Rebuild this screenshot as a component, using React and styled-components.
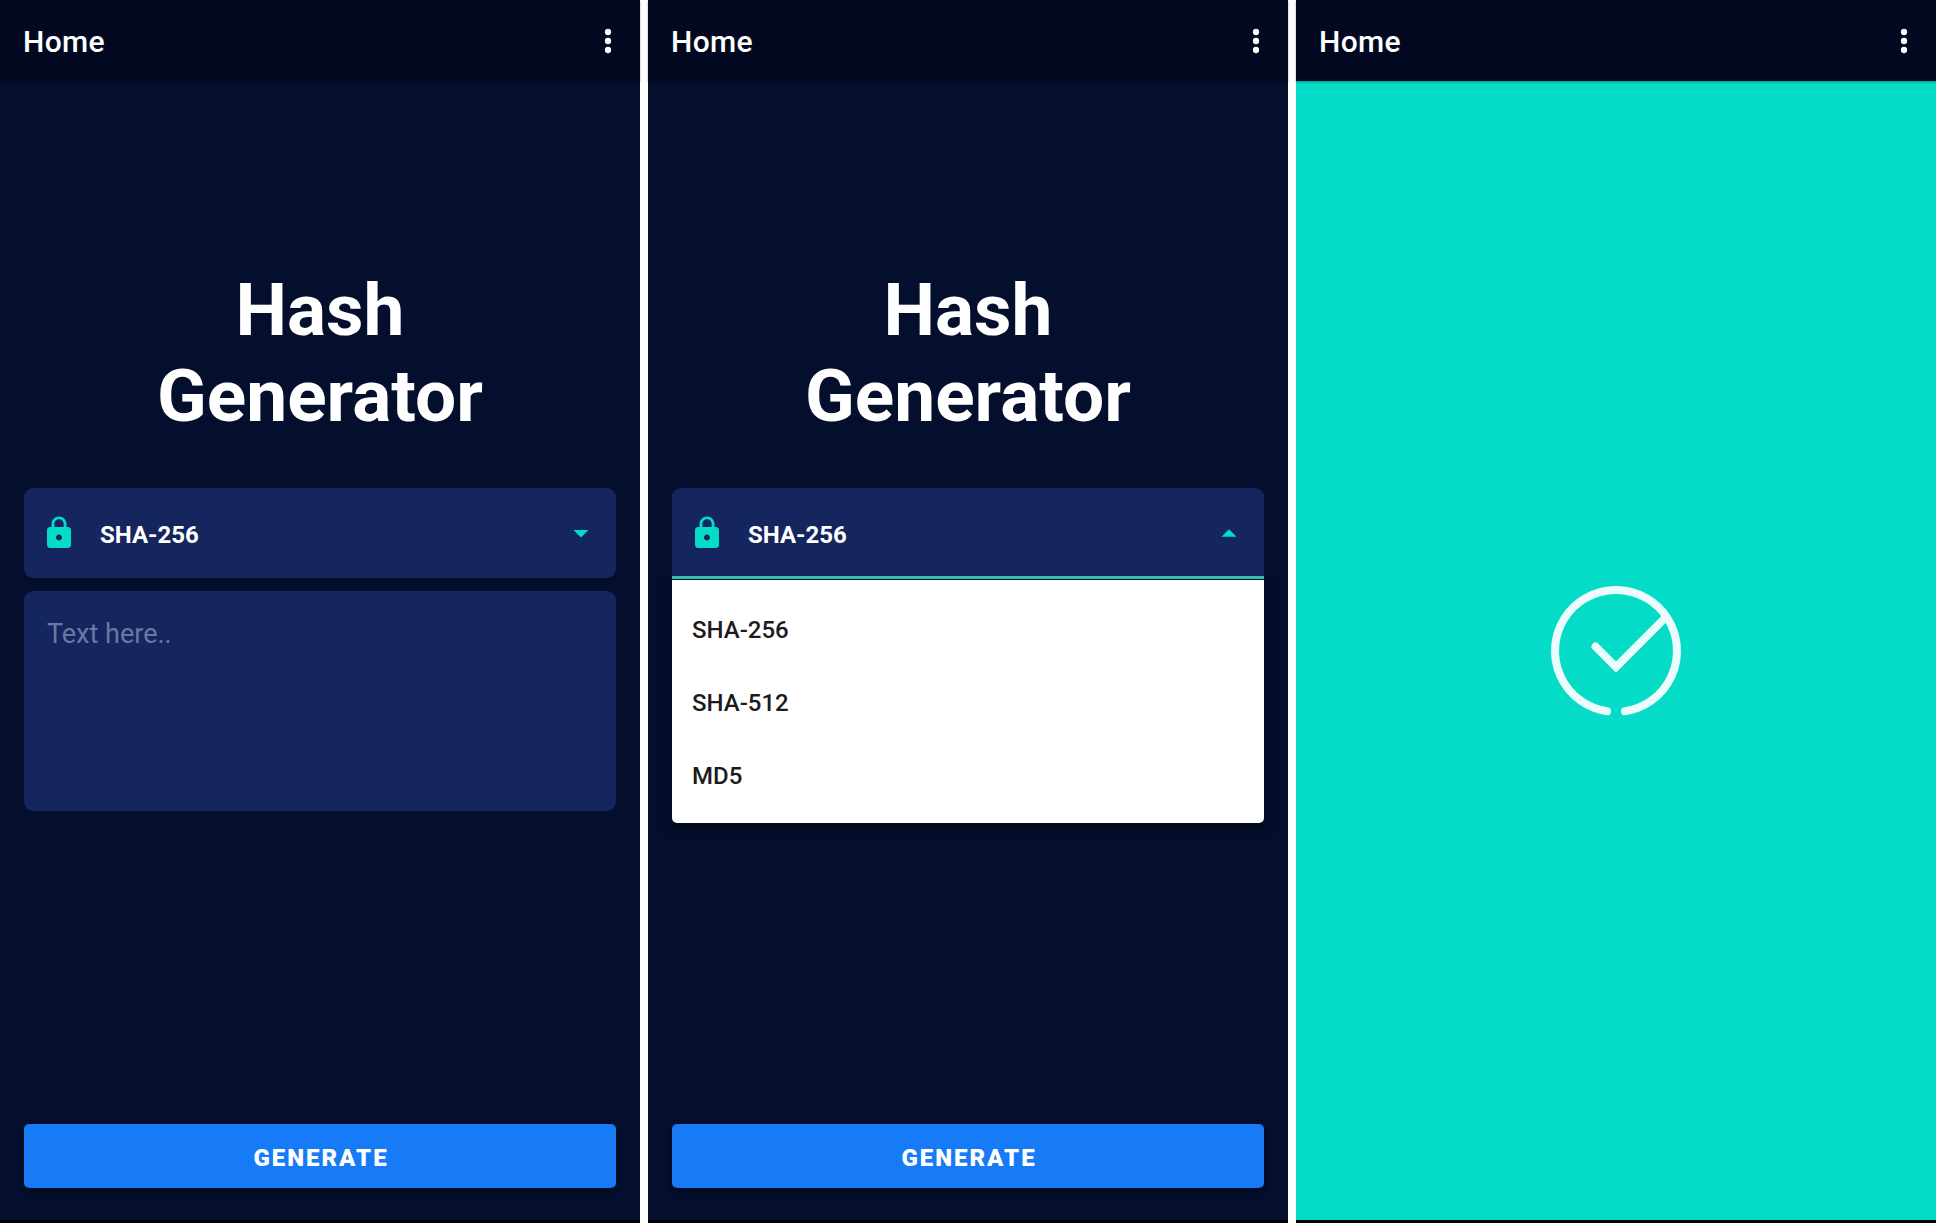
import React, { useState } from "react";
import styled, { createGlobalStyle } from "styled-components";

const GlobalStyle = createGlobalStyle`
  *, *::before, *::after { box-sizing: border-box; }
  body {
    margin: 0;
    background: #ffffff;
    font-family: Roboto, "Noto Sans", sans-serif;
    -webkit-font-smoothing: antialiased;
  }
`;

const Gallery = styled.div`
  display: grid;
  grid-template-columns: repeat(3, minmax(0, 1fr));
  gap: 8px;
  min-height: 100vh;
`;

const Phone = styled.section`
  display: flex;
  flex-direction: column;
  background: ${(p) => (p.$success ? "#04dcc8" : "#030f2c")};
  border-bottom: 3px solid #000000;
`;

const AppBar = styled.header`
  display: flex;
  align-items: center;
  justify-content: space-between;
  height: 81px;
  padding: 2px 14px 0 23px;
  background: #010820;
  box-shadow: 0 1px 2px rgba(0, 4, 20, 0.35);
`;

const BarTitle = styled.h2`
  margin: 0;
  color: #ffffff;
  font-size: 30px;
  font-weight: 500;
  line-height: 36px;
  letter-spacing: 0.0125em;
`;

const MenuButton = styled.button`
  display: flex;
  padding: 0 0 2px;
  border: 0;
  background: none;
  color: #ffffff;
  cursor: pointer;
`;

const Icon = styled.svg`
  display: block;
  width: 36px;
  height: 36px;
  fill: currentColor;
`;

const Screen = styled.main`
  flex: 1;
  display: flex;
  flex-direction: column;
  padding: 186px 24px 32px;
`;

const Title = styled.h1`
  margin: 0 0 49px;
  color: #ffffff;
  font-size: 73px;
  font-weight: 700;
  line-height: 86px;
  text-align: center;
`;

const SelectBox = styled.div`
  position: relative;
  display: grid;
  grid-template-columns: 36px 1fr 36px;
  grid-template-rows: 90px;
  align-items: center;
  height: 90px;
  padding: 0 17px;
  border-radius: ${(p) => (p.$open ? "9px 9px 0 0" : "9px")};
  box-shadow: ${(p) => (p.$open ? "inset 0 -2px #36c4b8, 0 1px #36c4b8" : "none")};
  background: #15265f;
  color: #04dcc8;

  > svg {
    grid-row: 1;
    pointer-events: none;
  }
  > svg:first-of-type { grid-column: 1; }
  > svg:last-of-type { grid-column: 3; }
`;

const Select = styled.select`
  grid-row: 1;
  grid-column: 1 / -1;
  width: 100%;
  height: 72px;
  padding: 4px 36px 0 59px;
  border: 0;
  outline: 0;
  appearance: none;
  background: transparent;
  color: #ffffff;
  font: 700 24px/28px Roboto, "Noto Sans", sans-serif;
  cursor: pointer;

  option { color: #1c1c1c; }
`;

const Options = styled.ul`
  position: absolute;
  top: calc(100% + 2px);
  left: 0;
  right: 0;
  margin: 0;
  padding: 12px 0;
  list-style: none;
  background: #ffffff;
  border-radius: 0 0 5px 5px;
  box-shadow: 0 6px 12px rgba(0, 2, 12, 0.5);
`;

const OptionButton = styled.button`
  display: block;
  width: 100%;
  height: 73px;
  padding: 2px 20px 0;
  border: 0;
  background: none;
  color: #1c1c1c;
  font: 500 24px/28px Roboto, "Noto Sans", sans-serif;
  text-align: left;
  cursor: pointer;
`;

const TextBox = styled.textarea`
  display: block;
  width: 100%;
  height: 220px;
  margin-top: 13px;
  padding: 27px 23px;
  border: 0;
  outline: 0;
  border-radius: 9px;
  resize: none;
  background: #15265f;
  color: #ffffff;
  font: 400 27px/32px Roboto, "Noto Sans", sans-serif;

  &::placeholder {
    color: #6b78a3;
    opacity: 1;
  }
`;

const GenerateButton = styled.button`
  height: 64px;
  margin-top: auto;
  padding: 4px 16px 0 18px;
  border: 0;
  border-radius: 5px;
  background: #177af7;
  box-shadow: 0 2px 4px rgba(0, 2, 12, 0.6);
  color: #ffffff;
  font: 900 24px/28px Roboto, "Noto Sans", sans-serif;
  letter-spacing: 2px;
  text-transform: uppercase;
  cursor: pointer;
`;

const SuccessScreen = styled.main`
  flex: 1;
  display: flex;
  align-items: center;
  justify-content: center;
`;

const SuccessMark = styled.svg`
  width: 136px;
  height: 136px;
  fill: none;
  stroke: #ecfbfb;
  stroke-width: 8;
  stroke-linecap: round;
`;

const HASHES = ["SHA-256", "SHA-512", "MD5"];

function Bar() {
  return (
    <AppBar>
      <BarTitle>Home</BarTitle>
      <MenuButton type="button" aria-label="More options">
        <Icon viewBox="0 0 24 24" aria-hidden="true">
          <circle cx="12" cy="6" r="2.1" />
          <circle cx="12" cy="12" r="2.1" />
          <circle cx="12" cy="18" r="2.1" />
        </Icon>
      </MenuButton>
    </AppBar>
  );
}

function HashSelect({ id, menu }) {
  const [value, setValue] = useState(HASHES[0]);
  const [open, setOpen] = useState(menu);
  return (
    <SelectBox $open={open}>
      <Select
        id={id}
        aria-label="Hash algorithm"
        value={value}
        onChange={(e) => setValue(e.target.value)}
      >
        {HASHES.map((name) => (
          <option key={name}>{name}</option>
        ))}
      </Select>
      <Icon viewBox="0 0 24 24" aria-hidden="true">
        <path d="M18 8h-1V6c0-2.76-2.24-5-5-5S7 3.240 7 6v2H6c-1.100 0-2 .9-2 2v10c0 1.100.9 2 2 2h12c1.100 0 2-.9 2-2V10c0-1.100-.9-2-2-2zm-6 9c-1.100 0-2-.9-2-2s.9-2 2-2 2 .9 2 2-.9 2-2 2zm3.100-9H8.900V6c0-1.710 1.390-3.100 3.100-3.100s3.100 1.390 3.100 3.100v2z" />
      </Icon>
      <Icon viewBox="0 0 24 24" aria-hidden="true">
        <path d={open ? "M7 14.500l5-5 5 5z" : "M7 10l5 5 5-5z"} />
      </Icon>
      {open && (
        <Options aria-label="Hash algorithms">
          {HASHES.map((name) => (
            <li key={name}>
              <OptionButton
                type="button"
                onClick={() => {
                  setValue(name);
                  setOpen(false);
                }}
              >
                {name}
              </OptionButton>
            </li>
          ))}
        </Options>
      )}
    </SelectBox>
  );
}

function GeneratorPhone({ id, menu = false }) {
  return (
    <Phone>
      <Bar />
      <Screen>
        <Title>
          Hash
          <br />
          Generator
        </Title>
        <HashSelect id={`${id}-hash`} menu={menu} />
        {!menu && (
          <TextBox id={`${id}-text`} aria-label="Text to hash" placeholder="Text here.." />
        )}
        <GenerateButton type="button">Generate</GenerateButton>
      </Screen>
    </Phone>
  );
}

function SuccessPhone() {
  return (
    <Phone $success>
      <Bar />
      <SuccessScreen>
        <SuccessMark viewBox="0 0 136 136" role="img" aria-label="Done">
          <path d="M59 128.300A61 61 0 1 1 77 128.300" />
          <path d="M47.500 63.500L68 84L117 35" />
        </SuccessMark>
      </SuccessScreen>
    </Phone>
  );
}

export default function App() {
  return (
    <>
      <GlobalStyle />
      <Gallery>
        <GeneratorPhone id="closed" />
        <GeneratorPhone id="open" menu />
        <SuccessPhone />
      </Gallery>
    </>
  );
}
